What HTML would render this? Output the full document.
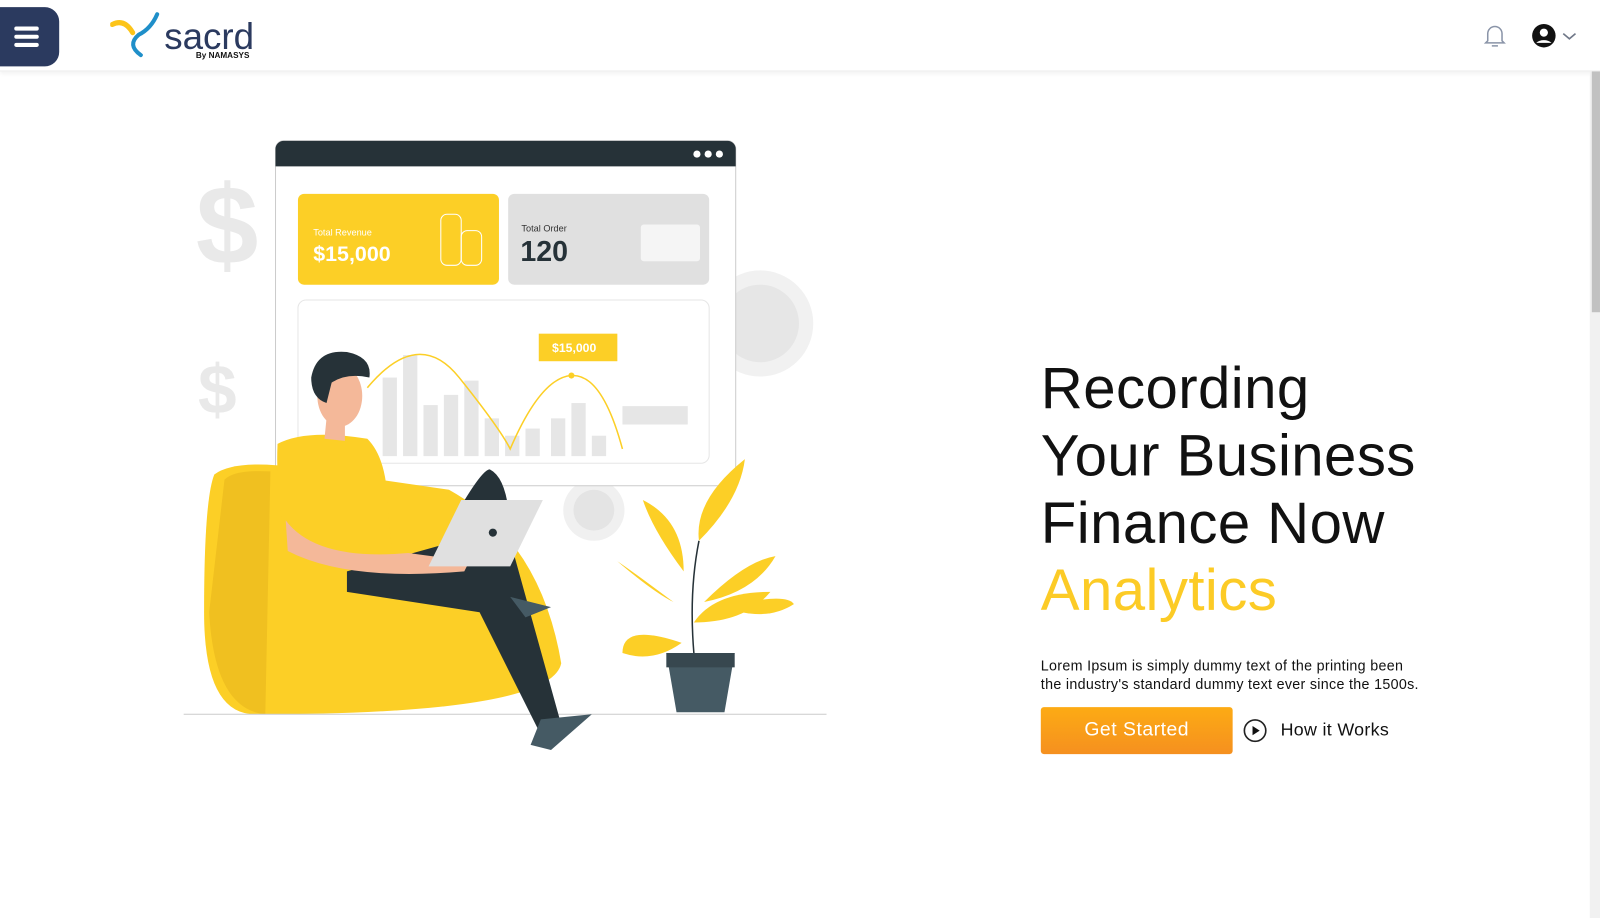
<!DOCTYPE html>
<html><head><meta charset="utf-8"><style>
*{margin:0;padding:0;box-sizing:border-box}
body{width:1600px;height:900px;overflow:hidden;background:#fff;font-family:"Liberation Sans",sans-serif;position:relative}
#w{position:absolute;left:0;top:0;width:1568px;height:882px;transform:scale(1.0204);transform-origin:0 0}
.nav{position:absolute;left:0;top:0;width:1568px;height:70px;background:#fff;box-shadow:0 2px 4px rgba(0,0,0,.06);border-bottom:1px solid #eee}
.burger{position:absolute;left:0;top:7px;width:58px;height:58px;background:#2b3a5f;border-radius:0 14px 14px 0}
.burger i{position:absolute;left:14px;width:24px;height:4px;background:#fff;border-radius:2px}
.scroll{position:absolute;left:1558px;top:70px;width:10px;height:830px;background:#f1f1f1}
.thumb{position:absolute;left:1560px;top:70px;width:8px;height:236px;background:#c1c1c1}
h1{position:absolute;left:1020px;top:348px;font-weight:400;font-size:57px;line-height:66px;color:#111;letter-spacing:0.4px}
h1 span{color:#fccb26}
.p{position:absolute;left:1020px;top:643px;font-size:14px;line-height:18px;color:#111;letter-spacing:0.3px;white-space:nowrap}
.btn{position:absolute;left:1020px;top:693px;width:188px;height:46px;background:linear-gradient(#fdab14,#f5901f);border-radius:3px;color:#fff;font-size:19px;text-align:center;line-height:46px;letter-spacing:.5px}
.how{position:absolute;left:1255px;top:705px;font-size:17.5px;color:#111;letter-spacing:.3px}
</style></head><body><div id="w">
<div class="nav">
<div class="burger"><i style="top:19px"></i><i style="top:27px"></i><i style="top:35px"></i></div>
<svg style="position:absolute;left:108px;top:10px" width="150" height="52">
<path d="M2 14 Q14 8 22 22" stroke="#fcc419" stroke-width="5" fill="none" stroke-linecap="round"/>
<path d="M46 4 Q40 18 28 24 Q16 34 30 44" stroke="#1f8fc9" stroke-width="4" fill="none" stroke-linecap="round"/>
<text x="53" y="38" font-size="36" fill="#2b3a5f" font-family="Liberation Sans">sacrd</text>
<text x="84" y="47" font-size="8" font-weight="bold" fill="#111">By NAMASYS</text>
</svg>
<svg style="position:absolute;left:1452px;top:22px" width="26" height="26"><path d="M6 18V11a7 7 0 0 1 14 0v7l2 2H4z" fill="none" stroke="#8a94a8" stroke-width="1.5"/><path d="M10 23h6" stroke="#8a94a8" stroke-width="1.5"/></svg>
<svg style="position:absolute;left:1500px;top:22px" width="50" height="26"><circle cx="13" cy="13" r="11.5" fill="#111"/><circle cx="13" cy="10" r="4" fill="#fff"/><path d="M5.5 20a9 6 0 0 1 15 0" fill="#fff"/><path d="M32 11l6 5 6-5" fill="none" stroke="#707888" stroke-width="1.6"/></svg>
</div>
<div class="scroll"></div><div class="thumb"></div>

<svg style="position:absolute;left:170px;top:130px" width="650" height="620">
<g fill="#e9e9e9"><text x="22" y="128" font-size="110" font-weight="bold">$</text><text x="24" y="275" font-size="68" font-weight="bold">$</text></g>
<circle cx="575" cy="187" r="52" fill="#f1f1f1"/><circle cx="575" cy="187" r="38" fill="#e6e6e6"/>
<circle cx="412" cy="370" r="30" fill="#f0f0f0"/><circle cx="412" cy="370" r="20" fill="#e4e4e4"/>
<rect x="100" y="8" width="451" height="338" rx="8" fill="#fff" stroke="#ccc"/>
<path d="M100 16a8 8 0 0 1 8-8h435a8 8 0 0 1 8 8v17H100z" fill="#263238"/>
<g fill="#fff"><circle cx="513" cy="21" r="3.5"/><circle cx="524" cy="21" r="3.5"/><circle cx="535" cy="21" r="3.5"/></g>
<rect x="122" y="60" width="197" height="89" rx="6" fill="#fccf26"/>
<text x="137" y="101" font-size="9" fill="#fff">Total Revenue</text>
<text x="137" y="126" font-size="21" font-weight="bold" fill="#fff">$15,000</text>
<g fill="none" stroke="#fff"><rect x="262" y="80" width="20" height="50" rx="6"/><rect x="282" y="96" width="20" height="34" rx="6"/></g>
<rect x="328" y="60" width="197" height="89" rx="6" fill="#e0e0e0"/>
<text x="341" y="97" font-size="9" fill="#333">Total Order</text>
<text x="340" y="126" font-size="28" font-weight="bold" fill="#263238">120</text>
<rect x="458" y="90" width="58" height="36" rx="3" fill="#f5f5f5"/>
<rect x="122" y="164" width="403" height="160" rx="8" fill="#fff" stroke="#e6e6e6"/>
<g fill="#e6e6e6"><rect x="205" y="240" width="14" height="77"/><rect x="225" y="218" width="14" height="99"/><rect x="245" y="267" width="14" height="50"/><rect x="265" y="257" width="14" height="60"/><rect x="285" y="243" width="14" height="74"/><rect x="305" y="280" width="14" height="37"/><rect x="325" y="297" width="14" height="20"/><rect x="345" y="290" width="14" height="27"/><rect x="370" y="280" width="14" height="37"/><rect x="390" y="265" width="14" height="52"/><rect x="410" y="297" width="14" height="20"/><rect x="440" y="268" width="64" height="18"/></g>
<path d="M190 250 Q240 190 280 240 T330 310 Q360 240 390 238 T440 310" fill="none" stroke="#fccf26" stroke-width="1.5"/>
<rect x="358" y="197" width="77" height="27" fill="#fccf26"/><text x="371" y="215" font-size="12" font-weight="bold" fill="#fff">$15,000</text>
<circle cx="390" cy="238" r="3" fill="#fccf26"/>
<path d="M40 335 Q60 320 120 328 L270 350 Q360 400 380 520 Q370 570 80 570 Q30 570 30 470 Q30 360 40 335z" fill="#fccf26"/>
<path d="M50 340 Q60 330 95 332 L90 570 Q40 565 35 470z" fill="#f0c020"/>
<line x1="10" y1="570" x2="640" y2="570" stroke="#ccc"/>
<path d="M102 305 Q130 290 190 300 Q210 320 210 370 L215 420 Q150 430 110 400 Q100 350 102 305z" fill="#fccf26"/>
<path d="M170 430 L260 405 Q300 330 310 330 Q330 340 330 400 L380 580 L360 590 L300 470 L170 450z" fill="#263238"/>
<path d="M360 575 L410 570 L370 605 L350 600z" fill="#455a64"/>
<path d="M330 455 L370 465 L345 475z" fill="#455a64"/>
<path d="M110 380 Q140 420 230 412 L290 420 L285 430 Q170 440 112 410z" fill="#f4b899"/>
<polygon points="282,360 362,360 330,425 250,425" fill="#e0e0e0"/>
<circle cx="313" cy="392" r="4" fill="#263238"/>
<path d="M148 300 L150 280 L168 280 L168 302z" fill="#f4b899"/>
<ellipse cx="163" cy="258" rx="22" ry="30" fill="#f4b899"/>
<path d="M135 240 Q140 212 170 215 Q195 220 192 240 Q170 235 155 245 L150 265 Q135 260 135 240z" fill="#263238"/>
<g fill="#fccf26"><path d="M515 400 Q510 360 560 320 Q555 360 515 400z"/><path d="M510 480 Q530 450 585 450 Q560 480 510 480z"/><path d="M500 430 Q470 390 460 360 Q500 380 500 430z"/><path d="M498 500 Q440 480 440 510 Q470 520 498 500z"/><path d="M520 460 Q560 420 590 415 Q570 450 520 460z"/><path d="M490 460 Q450 430 435 420 Q470 450 490 460z"/><path d="M540 465 Q600 450 608 462 Q580 480 540 465z"/></g>
<path d="M510 510 Q505 450 515 400" stroke="#263238" fill="none" stroke-width="1.5"/>
<path d="M483 510 H550 L540 568 H493z" fill="#455a64"/><rect x="483" y="510" width="67" height="14" fill="#37474f"/>
</svg>

<h1>Recording<br>Your Business<br>Finance Now<br><span>Analytics</span></h1>
<div class="p">Lorem Ipsum is simply dummy text of the printing been<br>the industry's standard dummy text ever since the 1500s.</div>
<div class="btn">Get Started</div>
<svg style="position:absolute;left:1218px;top:704px" width="24" height="24"><circle cx="12" cy="12" r="10.5" fill="none" stroke="#222" stroke-width="1.6"/><path d="M9.5 7.5l7 4.5-7 4.5z" fill="#111"/></svg>
<div class="how">How it Works</div>
</div></body></html>
